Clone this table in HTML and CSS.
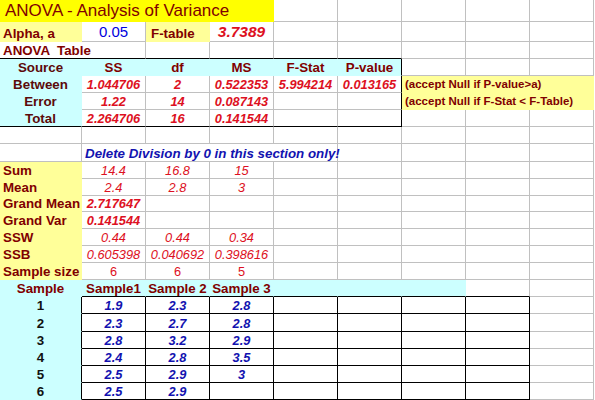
FILE: index.html
```html
<!DOCTYPE html>
<html>
<head>
<meta charset="utf-8">
<link rel="stylesheet" href="styles.css">
</head>
<body>
<div class="sheet">
  <!-- row 1 -->
  <div class="c title s4">ANOVA - Analysis of Variance</div>
  <div class="c"></div><div class="c"></div><div class="c"></div><div class="c"></div><div class="c"></div>
  <!-- row 2 -->
  <div class="c fy">Alpha, a</div>
  <div class="c ctr big blue">0.05</div>
  <div class="c fy ftab">F-table</div>
  <div class="c ctr big red it">3.7389</div>
  <div class="c"></div><div class="c"></div><div class="c"></div><div class="c"></div><div class="c"></div>
  <!-- row 3 -->
  <div class="c s2 bb pre">ANOVA  Table</div>
  <div class="c bb"></div><div class="c bb"></div><div class="c bb"></div><div class="c bb"></div>
  <div class="c"></div><div class="c"></div><div class="c"></div>
  <!-- row 4 -->
  <div class="c fc ctr dk">Source</div>
  <div class="c fc ctr">SS</div>
  <div class="c fc ctr">df</div>
  <div class="c fc ctr">MS</div>
  <div class="c fc ctr">F-Stat</div>
  <div class="c fc ctr br">P-value</div>
  <div class="c"></div><div class="c"></div><div class="c"></div>
  <!-- row 5 -->
  <div class="c fc ctr dk">Between</div>
  <div class="c ctr red it num">1.044706</div>
  <div class="c ctr red it num">2</div>
  <div class="c ctr red it num">0.522353</div>
  <div class="c ctr red it num">5.994214</div>
  <div class="c ctr red it num br">0.013165</div>
  <div class="c fn s3 note">(accept Null if P-value&gt;a)</div>
  <!-- row 6 -->
  <div class="c fc ctr dk">Error</div>
  <div class="c ctr red it num">1.22</div>
  <div class="c ctr red it num">14</div>
  <div class="c ctr red it num">0.087143</div>
  <div class="c"></div>
  <div class="c br"></div>
  <div class="c fn s3 note">(accept Null if F-Stat &lt; F-Table)</div>
  <!-- row 7 -->
  <div class="c fc ctr dk bb">Total</div>
  <div class="c ctr red it num bb">2.264706</div>
  <div class="c ctr red it num bb">16</div>
  <div class="c ctr red it num bb">0.141544</div>
  <div class="c bb"></div>
  <div class="c bb br"></div>
  <div class="c"></div><div class="c"></div><div class="c"></div>
  <!-- row 8 -->
  <div class="c"></div><div class="c"></div><div class="c"></div><div class="c"></div><div class="c"></div><div class="c"></div><div class="c"></div><div class="c"></div><div class="c"></div>
  <!-- row 9 -->
  <div class="c"></div>
  <div class="c s4 navy it del">Delete Division by 0 in this section only!</div>
  <div class="c"></div><div class="c"></div><div class="c"></div><div class="c"></div>
  <!-- row 10 -->
  <div class="c fy">Sum</div>
  <div class="c ctr red it reg num">14.4</div>
  <div class="c ctr red it reg num">16.8</div>
  <div class="c ctr red it reg num">15</div>
  <div class="c"></div><div class="c"></div><div class="c"></div><div class="c"></div><div class="c"></div>
  <!-- row 11 -->
  <div class="c fy">Mean</div>
  <div class="c ctr red it reg num">2.4</div>
  <div class="c ctr red it reg num">2.8</div>
  <div class="c ctr red it reg num">3</div>
  <div class="c"></div><div class="c"></div><div class="c"></div><div class="c"></div><div class="c"></div>
  <!-- row 12 -->
  <div class="c fy">Grand Mean</div>
  <div class="c ctr red it num">2.717647</div>
  <div class="c"></div><div class="c"></div><div class="c"></div><div class="c"></div><div class="c"></div><div class="c"></div><div class="c"></div>
  <!-- row 13 -->
  <div class="c fy">Grand Var</div>
  <div class="c ctr red it num">0.141544</div>
  <div class="c"></div><div class="c"></div><div class="c"></div><div class="c"></div><div class="c"></div><div class="c"></div><div class="c"></div>
  <!-- row 14 -->
  <div class="c fy">SSW</div>
  <div class="c ctr red it reg num">0.44</div>
  <div class="c ctr red it reg num">0.44</div>
  <div class="c ctr red it reg num">0.34</div>
  <div class="c"></div><div class="c"></div><div class="c"></div><div class="c"></div><div class="c"></div>
  <!-- row 15 -->
  <div class="c fy">SSB</div>
  <div class="c ctr red it reg num">0.605398</div>
  <div class="c ctr red it reg num">0.040692</div>
  <div class="c ctr red it reg num">0.398616</div>
  <div class="c"></div><div class="c"></div><div class="c"></div><div class="c"></div><div class="c"></div>
  <!-- row 16 -->
  <div class="c fy">Sample size</div>
  <div class="c ctr red reg num">6</div>
  <div class="c ctr red reg num">6</div>
  <div class="c ctr red reg num">5</div>
  <div class="c"></div><div class="c"></div><div class="c"></div><div class="c"></div><div class="c"></div>
  <!-- row 17 -->
  <div class="c fc ctr">Sample</div>
  <div class="c fc ctr bb">Sample1</div>
  <div class="c fc ctr bb">Sample 2</div>
  <div class="c fc ctr bb">Sample 3</div>
  <div class="c fc bb"></div><div class="c fc bb"></div><div class="c fc bb"></div>
  <div class="c bb"></div>
  <div class="c"></div>
  <!-- row 18 -->
  <div class="c fc ctr blk br">1</div>
  <div class="c ctr navy it num bk">1.9</div>
  <div class="c ctr navy it num bk">2.3</div>
  <div class="c ctr navy it num bk">2.8</div>
  <div class="c bk"></div><div class="c bk"></div><div class="c bk"></div><div class="c bk"></div>
  <div class="c"></div>
  <!-- row 19 -->
  <div class="c fc ctr blk br">2</div>
  <div class="c ctr navy it num bk">2.3</div>
  <div class="c ctr navy it num bk">2.7</div>
  <div class="c ctr navy it num bk">2.8</div>
  <div class="c bk"></div><div class="c bk"></div><div class="c bk"></div><div class="c bk"></div>
  <div class="c"></div>
  <!-- row 20 -->
  <div class="c fc ctr blk br">3</div>
  <div class="c ctr navy it num bk">2.8</div>
  <div class="c ctr navy it num bk">3.2</div>
  <div class="c ctr navy it num bk">2.9</div>
  <div class="c bk"></div><div class="c bk"></div><div class="c bk"></div><div class="c bk"></div>
  <div class="c"></div>
  <!-- row 21 -->
  <div class="c fc ctr blk br">4</div>
  <div class="c ctr navy it num bk">2.4</div>
  <div class="c ctr navy it num bk">2.8</div>
  <div class="c ctr navy it num bk">3.5</div>
  <div class="c bk"></div><div class="c bk"></div><div class="c bk"></div><div class="c bk"></div>
  <div class="c"></div>
  <!-- row 22 -->
  <div class="c fc ctr blk br">5</div>
  <div class="c ctr navy it num bk">2.5</div>
  <div class="c ctr navy it num bk">2.9</div>
  <div class="c ctr navy it num bk">3</div>
  <div class="c bk"></div><div class="c bk"></div><div class="c bk"></div><div class="c bk"></div>
  <div class="c"></div>
  <!-- row 23 -->
  <div class="c fc ctr blk br">6</div>
  <div class="c ctr navy it num bk">2.5</div>
  <div class="c ctr navy it num bk">2.9</div>
  <div class="c bk"></div>
  <div class="c bk"></div><div class="c bk"></div><div class="c bk"></div><div class="c bk"></div>
  <div class="c"></div>
</div>
</body>
</html>
```

FILE: styles.css
```css
html, body {
  margin: 0;
  padding: 0;
  background: #ffffff;
  overflow: hidden;
}

.sheet {
  display: grid;
  grid-template-columns: 82px repeat(8, 64px);
  grid-template-rows: 22px 20px repeat(6, 17px) 18px 17px 17px 16px repeat(6, 17px) 18px repeat(4, 17px);
  font-family: "Liberation Sans", Arial, sans-serif;
  font-size: 13.33px;
  font-weight: bold;
  color: #800000;
}

.c {
  box-sizing: border-box;
  border-right: 1px solid #c0c0c0;
  border-bottom: 1px solid #c0c0c0;
  display: flex;
  align-items: flex-end;
  padding: 0 2px 0 3px;
  line-height: 15px;
  white-space: nowrap;
  min-width: 0;
  overflow: visible;
}

.s2 { grid-column: span 2; }
.s3 { grid-column: span 3; }
.s4 { grid-column: span 4; }

.pre { white-space: pre; }
.ctr { justify-content: center; padding: 0; }

/* fills */
.title {
  background: #ffff00;
  border-color: transparent;
  font-weight: normal;
  font-size: 17px;
  line-height: 20px;
  padding-left: 5px;
  color: #800000;
}
.fy { background: #ffff99; border-color: transparent; }
.fn { background: #ffff99; border-color: transparent; }
.fc { background: #ccffff; border-color: transparent; }

/* black borders */
.bb { border-bottom-color: #000000; }
.br { border-right-color: #000000; }
.bk { border-right-color: #000000; border-bottom-color: #000000; }

/* text styles */
.dk { color: #5c0a0a; }
.blk { color: #111111; }
.red { color: #dd1022; }
.blue { color: #0000dd; }
.navy { color: #1212b0; }
.it { font-style: italic; }
.reg { font-weight: normal; }
.num { font-size: 12.8px; }
.big { font-size: 15px; font-weight: normal; line-height: 18px; }
.big.red { font-size: 15.5px; font-weight: bold; }
.ftab { padding-left: 5px; }
.del { padding-left: 3px; }
.note {
  font-size: 11.5px;
  padding-left: 3px;
  line-height: 14px;
  padding-bottom: 1px;
}
```
